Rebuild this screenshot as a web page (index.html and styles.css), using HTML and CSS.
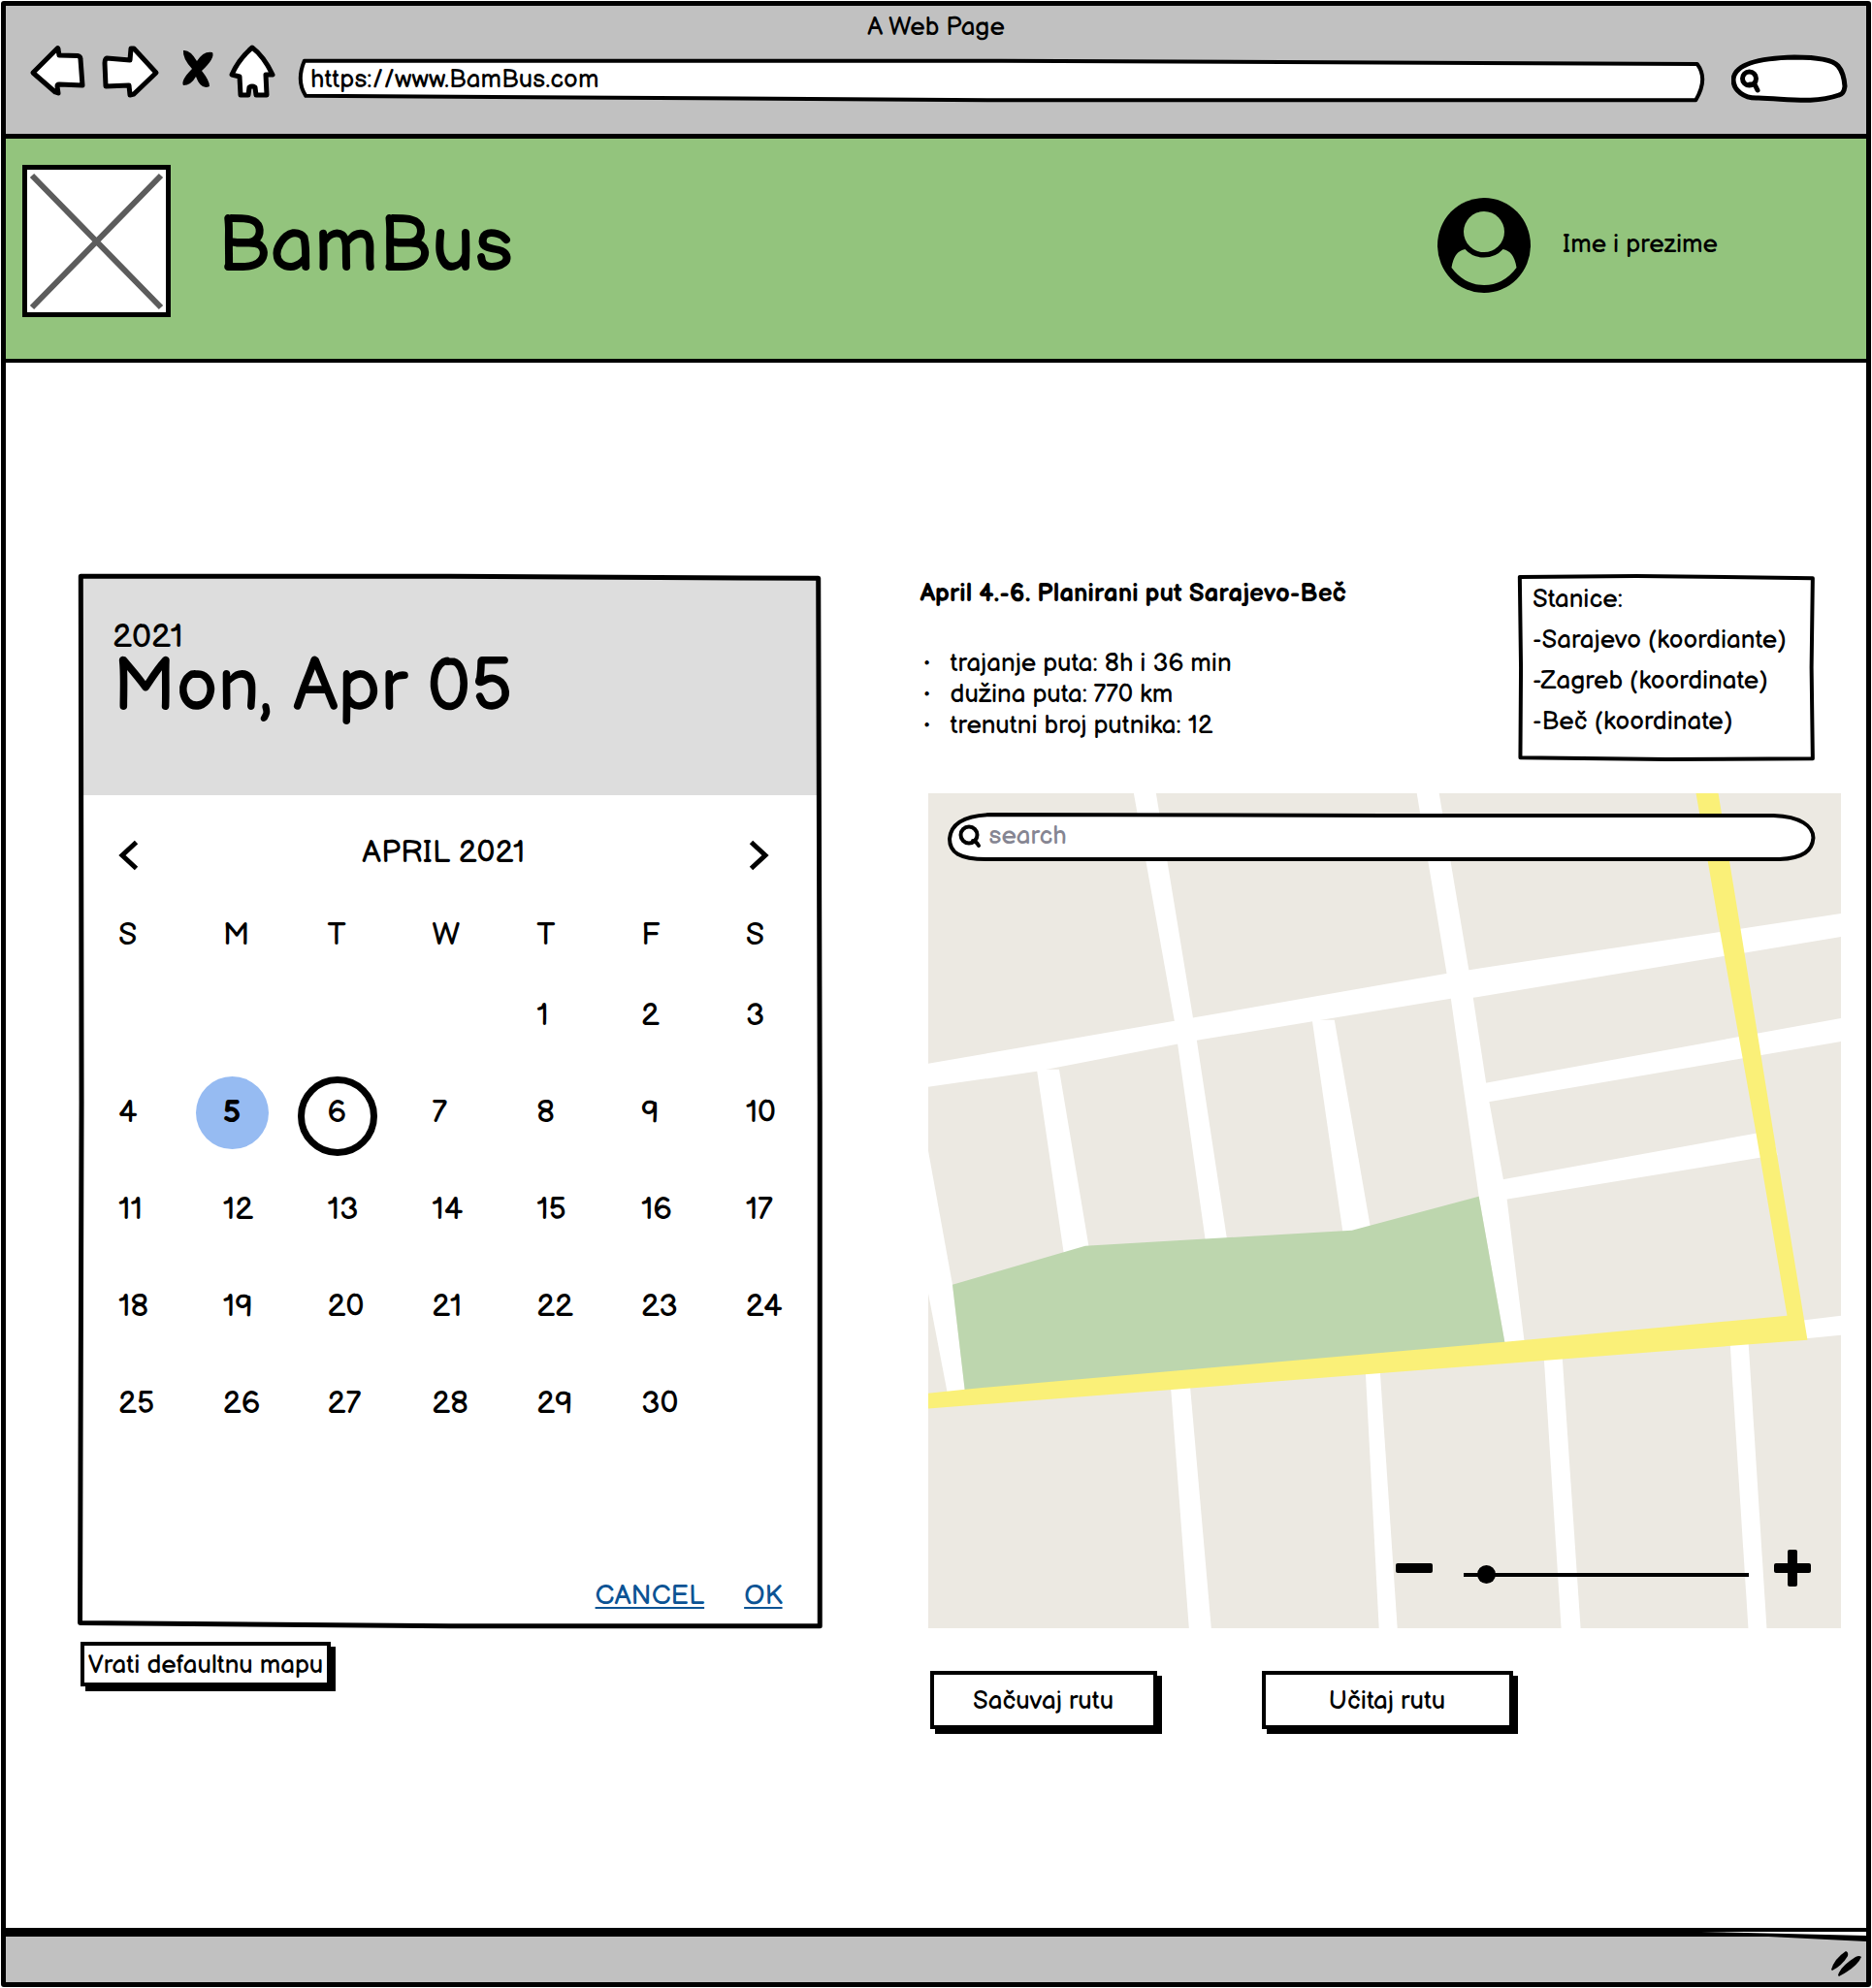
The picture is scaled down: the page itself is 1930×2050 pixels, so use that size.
FILE: index.html
```html
<!DOCTYPE html>
<html lang="bs">
<head>
<meta charset="utf-8">
<meta name="viewport" content="width=device-width, initial-scale=1">
<title>BamBus</title>
<link rel="stylesheet" href="styles.css">
</head>
<body>
<div class="window">
  <div class="chrome">
    <div class="chrome-title">A Web Page</div>
    <div class="toolbar">
      <div class="nav-buttons">
        <button class="icon-button" type="button" aria-label="Back"><svg width="56" height="60" viewBox="31 46 56 60"><path class="arrow" d="M34 75 59 50Q60 49 60 51L61 57 80 57.500Q83 58 83 61L85 88 61 87Q59 87 59 89L60 96 57 95Z"/></svg></button>
        <button class="icon-button" type="button" aria-label="Forward"><svg width="58" height="60" viewBox="105 46 58 60"><path class="arrow" d="M110 60Q108 61 108 65L109 89 133 88 134 98 138 97 161 75 138 50 135 50 134 62Z"/></svg></button>
        <button class="icon-button" type="button" aria-label="Stop"><svg width="40" height="60" viewBox="181 46 40 60"><path d="M189 52Q196 51 203 63Q210 52 219 54Q222 60 208 73Q216 83 216 89Q207 93 202 79Q197 88 189 88Q186 83 198 71Q188 60 189 52Z"/></svg></button>
        <button class="icon-button" type="button" aria-label="Home"><svg width="46" height="60" viewBox="239 46 46 60"><path class="arrow" d="M260 49Q272 58 281 77L274 77 275 98 264 98 263 90Q260 88 257 90L256 98 248 98 247 79 239 77Q246 61 260 49Z"/></svg></button>
      </div>
      <div class="address">
        <svg class="sketch" viewBox="0 0 100 100" preserveAspectRatio="none" aria-hidden="true"><path d="M.4 4 50 4 99.500 11Q100.300 45 99.400 94L50 94 .5 84Q-.2 50 .4 4Z"/></svg>
        <input class="address-input" type="text" aria-label="Address" value="https://www.BamBus.com">
      </div>
      <div class="quick-search">
        <svg class="quick-shape" viewBox="1785 57 120 50" aria-hidden="true"><path d="M1787 83C1788 70 1805 61 1850 60C1873 60 1889 62 1895 69Q1901 76 1902 90Q1901 98 1896 99C1870 108 1845 103 1813 102C1798 103 1787 94 1787 83Z"/><circle class="lens" cx="1803.500" cy="82" r="7"/><path class="lens" d="M1804 88 1809 88 1812 94"/></svg>
        <input class="quick-input" type="search" aria-label="Search the web">
      </div>
    </div>
  </div>

  <header class="banner">
    <svg class="logo" width="153" height="157" viewBox="0 0 153 157" role="img" aria-label="Logo"><rect x="2.500" y="2.500" width="148" height="152" fill="#fff" stroke="#000" stroke-width="5"/><path d="M10 11 143 147M143 11 10 147" stroke="#5c5c5c" stroke-width="6"/></svg>
    <h1 class="brand">BamBus</h1>
    <div class="user">
      <svg width="96" height="98" viewBox="0 0 96 98" aria-hidden="true"><ellipse cx="48" cy="49" rx="48" ry="49"/><ellipse class="cutout" cx="48" cy="35" rx="21" ry="21"/><path class="cutout" d="M14.500 72Q17 55 28.500 53Q36 61.500 48 61.500Q60 61.500 67.500 53Q79 55 81.500 72Q68 90 48 90Q28 90 14.500 72Z"/></svg>
      <span>Ime i prezime</span>
    </div>
  </header>

  <main class="content">
    <section class="planner">
      <div class="calendar">
        <svg class="sketch sketch-open heavy" viewBox="0 0 100 100" preserveAspectRatio="none" aria-hidden="true"><path d="M.3 .2 50 .2 99.500 .4 99.700 50 99.700 99.800 50 99.800 .2 99.500 .4 50Z"/></svg>
        <div class="calendar-head">
          <div class="calendar-year">2021</div>
          <div class="calendar-date">Mon, Apr 05</div>
        </div>
        <div class="month-nav">
          <button class="icon-button" type="button" aria-label="Previous month"><svg width="20" height="32" viewBox="0 0 20 32"><path class="chevron" d="M17.500 2.500 3 16 17.500 29.500"/></svg></button>
          <span class="month-title">APRIL 2021</span>
          <button class="icon-button" type="button" aria-label="Next month"><svg width="20" height="32" viewBox="0 0 20 32"><path class="chevron" d="M2.500 2.500 17 16 2.500 29.500"/></svg></button>
        </div>
        <table class="days">
          <thead>
            <tr><th>S</th><th>M</th><th>T</th><th>W</th><th>T</th><th>F</th><th>S</th></tr>
          </thead>
          <tbody>
            <tr><td></td><td></td><td></td><td></td><td><button type="button">1</button></td><td><button type="button">2</button></td><td><button type="button">3</button></td></tr>
            <tr><td><button type="button">4</button></td><td><button class="selected" type="button">5</button></td><td><button class="ringed" type="button">6</button></td><td><button type="button">7</button></td><td><button type="button">8</button></td><td><button type="button">9</button></td><td><button type="button">10</button></td></tr>
            <tr><td><button type="button">11</button></td><td><button type="button">12</button></td><td><button type="button">13</button></td><td><button type="button">14</button></td><td><button type="button">15</button></td><td><button type="button">16</button></td><td><button type="button">17</button></td></tr>
            <tr><td><button type="button">18</button></td><td><button type="button">19</button></td><td><button type="button">20</button></td><td><button type="button">21</button></td><td><button type="button">22</button></td><td><button type="button">23</button></td><td><button type="button">24</button></td></tr>
            <tr><td><button type="button">25</button></td><td><button type="button">26</button></td><td><button type="button">27</button></td><td><button type="button">28</button></td><td><button type="button">29</button></td><td><button type="button">30</button></td><td></td></tr>
          </tbody>
        </table>
        <div class="calendar-actions"><a href="#cancel">CANCEL</a><a href="#ok">OK</a></div>
      </div>
      <button class="box-button compact" type="button">Vrati defaultnu mapu</button>
    </section>

    <section class="route">
      <div class="route-top">
        <div class="route-info">
          <h2>April 4.-6. Planirani put Sarajevo-Beč</h2>
          <ul>
            <li>trajanje puta: 8h i 36 min</li>
            <li>dužina puta: 770 km</li>
            <li>trenutni broj putnika: 12</li>
          </ul>
        </div>
        <div class="stations">
          <svg class="sketch sketch-open" viewBox="0 0 100 100" preserveAspectRatio="none" aria-hidden="true"><path d="M.6 1.500 40 1 99.300 2.200 98.900 50 99.300 98.600 50 99 .8 98 1 50Z"/></svg>
          <p>Stanice:</p>
          <p>-Sarajevo (koordiante)</p>
          <p>-Zagreb (koordinate)</p>
          <p>-Beč (koordinate)</p>
        </div>
      </div>

      <div class="map">
        <svg class="map-picture" viewBox="0 0 942 862" role="img" aria-label="Map">
          <rect width="942" height="862" fill="#ece9e2"/>
          <g fill="#fff">
            <path d="M212 0H235L273 231 277 255 308 459 308 462 286 462 258 264 254 235Z"/>
            <path d="M0 279 254 235 534 186 942 124V148L562 211 539 212 277 255 112 287 0 303Z"/>
            <path d="M504 0H527L558 184 577 309 597 419 615 566 595 568 568 416 539 211Z"/>
            <path d="M112 285H135L166 470 140 476Z"/>
            <path d="M396 234H419L456 447 428 455Z"/>
            <path d="M575 299 942 232V256L575 319Z"/>
            <path d="M590 399 870 348 876 373 590 420Z"/>
            <path d="M0 369 25 507 38 618 20 620 0 516Z"/>
            <path d="M900 544 942 539V559L900 563Z"/>
            <path d="M250 610H270L292 862H269Z"/>
            <path d="M451 595H466L484 862H465Z"/>
            <path d="M635 580H654L673 862H653Z"/>
            <path d="M827 565H846L865 862H846Z"/>
          </g>
          <path d="M25 507 162 467 437 451 568 416 595 568 38 618Z" fill="#bdd6ae"/>
          <path d="M792 0H815L838 140 872 351 907 564 0 635V619L38 615 595 566 886 539 854 351 817 144Z" fill="#faf078"/>
        </svg>
        <label class="map-search">
          <svg class="sketch" viewBox="0 0 895 50" preserveAspectRatio="none" aria-hidden="true"><path d="M44 2 450 3 852 3C880 4 893 14 893 26C892 39 883 47 858 48L40 48C12 48 2 41 2 27C3 12 17 3 44 2Z"/></svg>
          <svg class="map-lens" width="24" height="26" viewBox="0 0 24 26" aria-hidden="true"><circle cx="11" cy="11" r="8.500"/><path d="M15 17Q18 17 21 22"/></svg>
          <input type="search" placeholder="search" aria-label="Search the map">
        </label>
        <div class="zoom">
          <button class="icon-button" type="button" aria-label="Zoom out"><svg width="38" height="38" viewBox="0 0 38 38"><rect y="14" width="38" height="10" rx="2"/></svg></button>
          <input type="range" min="0" max="100" value="5" aria-label="Zoom level">
          <button class="icon-button" type="button" aria-label="Zoom in"><svg width="38" height="38" viewBox="0 0 38 38"><rect y="14" width="38" height="10" rx="2"/><rect x="14" width="10" height="38" rx="2"/></svg></button>
        </div>
      </div>

      <div class="route-actions">
        <button class="box-button" type="button">Sačuvaj rutu</button>
        <button class="box-button wide" type="button">Učitaj rutu</button>
      </div>
    </section>
  </main>

  <footer class="status">
    <svg class="status-gap" viewBox="0 0 200 14" aria-hidden="true"><path d="M0 5 200 9V14L0 4Z"/><path d="M30 4 200 4 200 8Z" fill="#fff"/></svg>
    <svg class="grip" width="32" height="27" viewBox="0 0 32 27" aria-hidden="true"><path d="M1 19Q4 8 16 0 19 1 18 5 12 15 2 20Z"/><path d="M8 25Q10 16 26 6 30 4 32 6 28 16 9 26Z"/></svg>
  </footer>
</div>
</body>
</html>
```

FILE: styles.css
```css
* {
  box-sizing: border-box;
}

body {
  margin: 0;
  min-height: 100vh;
  display: flex;
  background: #fff;
  color: #000;
  font: 26px/32px "Balsamiq Sans", "Liberation Sans", Arial, sans-serif;
}

h1,
h2,
p,
ul {
  margin: 0;
  padding: 0;
}

button,
input {
  font: inherit;
  color: inherit;
}

svg {
  display: block;
}

.window {
  flex: 1;
  display: flex;
  flex-direction: column;
  margin: 1px;
  border: 5px solid #000;
  border-radius: 3px;
}

.icon-button {
  display: block;
  padding: 0;
  border: 0;
  background: none;
}

.icon-button svg {
  overflow: visible;
}

/* Hand-drawn outlines stretched behind or over a box */
.sketch {
  position: absolute;
  inset: 0;
  width: 100%;
  height: 100%;
  overflow: visible;
  pointer-events: none;
}

.sketch path {
  fill: #fff;
  stroke: #000;
  stroke-width: 4px;
  stroke-linejoin: round;
  vector-effect: non-scaling-stroke;
}

.sketch-open path {
  fill: none;
}

.heavy path {
  stroke-width: 5px;
}

/* Browser bar */
.chrome {
  padding: 7px 0 32px;
  background: #c1c1c1;
  border-bottom: 5px solid #000;
}

.chrome-title {
  padding-bottom: 1px;
  text-align: center;
}

.toolbar {
  display: flex;
  align-items: flex-end;
  gap: 28px;
  padding: 0 19px 0 25px;
}

.nav-buttons {
  display: flex;
  gap: 18px;
}

.arrow {
  fill: #fff;
  stroke: #000;
  stroke-width: 5px;
  stroke-linejoin: round;
}

.address {
  position: relative;
  flex: 1;
  height: 45px;
  margin-left: -5px;
}

.address-input {
  position: relative;
  width: 100%;
  height: 42px;
  padding: 0 12px;
  border: 0;
  background: none;
}

.quick-search {
  position: relative;
  width: 120px;
  height: 50px;
}

.quick-shape {
  position: absolute;
  inset: 0;
  fill: #fff;
  stroke: #000;
  stroke-width: 5px;
}

.lens {
  fill: none;
  stroke-width: 5px;
  stroke-linecap: round;
}

.quick-input {
  position: relative;
  width: 100%;
  height: 100%;
  padding: 0 12px 0 32px;
  border: 0;
  background: none;
}

/* Banner */
.banner {
  display: flex;
  align-items: center;
  padding: 27px 153px 43px 17px;
  background: #93c47d;
  border-bottom: 4px solid #000;
}

.brand {
  flex: 1;
  padding: 12px 0 0 48px;
  font-size: 80px;
  line-height: 96px;
  font-weight: 400;
}

.user {
  display: flex;
  align-items: center;
  gap: 33px;
  padding-top: 8px;
}

.cutout {
  fill: #93c47d;
}

/* Main content */
.content {
  flex: 1;
  display: grid;
  grid-template-columns: 767fr 950fr;
  gap: 101px;
  align-items: start;
  padding: 218px 26px 100px 75px;
}

.calendar {
  position: relative;
  padding: 4px;
}

.calendar-head {
  padding: 43px 31px 75px;
  background: #ddd;
}

.calendar-year {
  font-size: 34px;
  line-height: 36px;
}

.calendar-date {
  font-size: 76px;
  line-height: 70px;
}

.month-nav {
  display: flex;
  justify-content: space-between;
  padding: 46px 52px 34px 38px;
}

.month-title {
  font-size: 32px;
  line-height: 28px;
}

.chevron {
  fill: none;
  stroke: #000;
  stroke-width: 5px;
}

.days {
  width: calc(100% - 40px);
  margin-left: 37px;
  table-layout: fixed;
  border-collapse: collapse;
  font-size: 32px;
}

.days th {
  width: 15%;
  height: 66px;
  padding: 0;
  text-align: left;
  font-weight: 400;
}

.days th:last-child {
  width: 10%;
}

.days td {
  height: 100px;
  padding: 0;
}

.days button {
  position: relative;
  display: block;
  padding: 0;
  border: 0;
  background: none;
  isolation: isolate;
}

.days .selected {
  font-weight: 700;
}

.selected::before,
.ringed::before {
  content: "";
  position: absolute;
  z-index: -1;
  top: 50%;
  left: 50%;
  box-sizing: border-box;
  width: 82px;
  height: 82px;
  margin: -38px 0 0 -40px;
  border: 7px solid #000;
  border-radius: 50%;
}

.selected::before {
  width: 75px;
  height: 75px;
  margin: -38px 0 0 -37px;
  border: 0;
  background: #96bbf2;
}

.calendar-actions {
  display: flex;
  justify-content: flex-end;
  gap: 41px;
  padding: 132px 37px 13px;
  font-size: 28px;
}

.calendar-actions a {
  color: #0b5394;
  text-decoration-thickness: 2px;
  text-underline-offset: 3px;
}

.box-button {
  width: 234px;
  height: 60px;
  padding: 3px 0 0;
  border: 4px solid #000;
  background: #fff;
  box-shadow: 5px 5px 0 #000;
}

.box-button.wide {
  width: 259px;
}

.box-button.compact {
  width: 258px;
  height: 46px;
  margin: 14px 0 0 2px;
}

.route-top {
  display: flex;
  justify-content: space-between;
  padding-right: 27px;
}

.route-info h2 {
  padding: 5px 0 40px;
  font-size: 26px;
  line-height: 32px;
}

.route-info ul {
  padding-left: 5px;
  list-style: none;
}

.route-info li {
  display: flex;
}

.route-info li::before {
  content: "·";
  width: 26px;
  font-weight: 700;
}

.stations {
  position: relative;
  width: 306px;
  padding: 6px 15px 19px;
  line-height: 42px;
  white-space: nowrap;
}

.map {
  position: relative;
  margin: 33px 0 0 8px;
}

.map-picture {
  width: 100%;
}

.map-search {
  position: absolute;
  top: 20px;
  left: 20px;
  right: 27px;
  height: 50px;
  display: flex;
  align-items: center;
}

.map-lens {
  position: relative;
  margin-left: 11px;
  fill: none;
  stroke: #000;
  stroke-width: 4px;
  stroke-linecap: round;
}

.map-search input {
  position: relative;
  flex: 1;
  height: 44px;
  padding: 0 24px 2px 8px;
  border: 0;
  background: none;
}

.map-search input::placeholder {
  color: #858592;
}

.zoom {
  position: absolute;
  right: 31px;
  bottom: 43px;
  display: flex;
  align-items: center;
  gap: 26px;
}

.zoom input {
  width: 294px;
  height: 20px;
  margin: 13px 0 0 6px;
  appearance: none;
  background: linear-gradient(#000, #000) center / 100% 4px no-repeat;
}

.zoom input::-webkit-slider-thumb {
  appearance: none;
  width: 19px;
  height: 19px;
  border-radius: 50%;
  background: #000;
}

.route-actions {
  display: flex;
  gap: 108px;
  padding: 44px 0 0 10px;
}

/* Status bar */
.status {
  position: relative;
  height: 56px;
  padding: 15px 5px 0;
  background: #c1c1c1;
  border-top: 9px solid #000;
  display: flex;
  justify-content: flex-end;
}

.status-gap {
  position: absolute;
  top: -9px;
  right: 0;
  width: 200px;
  height: 14px;
}
```
